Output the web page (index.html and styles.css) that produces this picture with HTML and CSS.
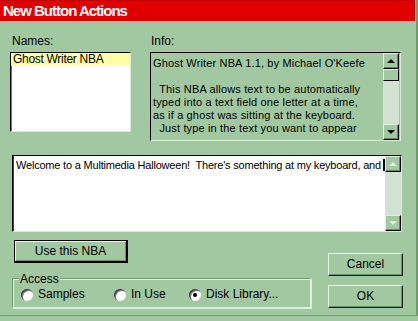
FILE: index.html
```html
<!DOCTYPE html>
<html>
<head lang="en">
    <meta charset="UTF-8">
    <title>New Button Actions</title>
    <link rel="stylesheet" href="styles.css">
</head>
<body>
<div class="dialog">
    <div class="titlebar">New Button Actions</div>
    <div class="content">
        <div class="top">
            <div class="names">
                <div class="label">Names:</div>
                <div class="listbox">
                    <div class="item sel">Ghost Writer NBA</div>
                </div>
            </div>
            <div class="info">
                <div class="label">Info:</div>
                <div class="infobox">
                    <div class="infotext">Ghost Writer NBA 1.1, by Michael O'Keefe

  This NBA allows text to be automatically
typed into a text field one letter at a time,
as if a ghost was sitting at the keyboard.
  Just type in the text you want to appear</div>
                    <div class="vscroll">
                        <div class="sbtn"><span class="arr up"></span></div>
                        <div class="thumb"></div>
                        <div class="track"></div>
                        <div class="sbtn"><span class="arr down"></span></div>
                    </div>
                </div>
            </div>
        </div>

        <div class="editbox">
            <div class="edittext">Welcome to a Multimedia Halloween!  There's something at my keyboard, and<span class="caret"></span></div>
            <div class="vscroll off">
                <div class="sbtn"><span class="arr up"></span></div>
                <div class="track"></div>
                <div class="sbtn"><span class="arr down"></span></div>
            </div>
        </div>

        <div class="bottom">
            <div class="left">
                <div class="btn default">Use this NBA</div>
                <div class="access">
                    <div class="legend">Access</div>
                    <div class="radios">
                        <div class="radio r1"><span class="dot"></span>Samples</div>
                        <div class="radio r2"><span class="dot"></span>In Use</div>
                        <div class="radio r3"><span class="dot on"></span>Disk Library...</div>
                    </div>
                </div>
            </div>
            <div class="right">
                <div class="btn">Cancel</div>
                <div class="btn">OK</div>
            </div>
        </div>
    </div>
</div>
</body>
</html>
```
FILE: styles.css
```css
* {
    margin: 0;
    padding: 0;
    box-sizing: border-box;
}

body {
    background: #a2c8a2;
    font-family: "Liberation Sans", Arial, sans-serif;
    font-size: 11px;
    line-height: 13px;
    color: #000;
}

.dialog {
    width: 418px;
    height: 316px;
    border-right: 2px solid #6e9a6e;
    border-bottom: 1px solid #6e9a6e;
}

.titlebar {
    height: 21px;
    margin-right: 1px;
    background: #e00000;
    border-top: 1px solid #c00000;
    border-right: 1px solid #c00000;
    color: #fff;
    font-weight: bold;
    font-size: 15px;
    letter-spacing: -1px;
    line-height: 19px;
    padding-left: 3px;
}

.content {
    padding: 13px 0 0 10px;
}

.label {
    height: 14px;
    line-height: 14px;
    margin-bottom: 4px;
    font-size: 12px;
}

.top {
    display: flex;
    gap: 19px;
}

.names .label {
    padding-left: 2px;
}

.info .label {
    padding-left: 1px;
}

.listbox {
    width: 121px;
    height: 80px;
    background: #fff;
    border: 1px solid;
    border-color: #000 #d8ecd8 #d8ecd8 #000;
    box-shadow: inset 1px 1px #707070;
}

.item {
    height: 13px;
    padding-left: 2px;
    line-height: 13px;
    font-size: 12px;
    letter-spacing: -0.3px;
}

.item.sel {
    background: #ffffa8;
}

.infobox {
    display: flex;
    width: 251px;
    height: 89px;
    border: 1px solid;
    border-color: #000 #d8ecd8 #d8ecd8 #000;
}

.infotext {
    flex: 1;
    white-space: pre;
    padding: 4px 0 0 2px;
    letter-spacing: 0.15px;
    overflow: hidden;
}

.vscroll {
    width: 16px;
    display: flex;
    flex-direction: column;
    margin-right: 1px;
}

.sbtn {
    height: 16px;
    background: #a2c8a2;
    border: 1px solid;
    border-color: #e0f0e0 #000 #000 #e0f0e0;
    box-shadow: inset -1px -1px #5e8a5e;
    display: flex;
    align-items: center;
    justify-content: center;
}

.thumb {
    height: 12px;
    background: #a2c8a2;
    border: 1px solid;
    border-color: #e0f0e0 #000 #000 #e0f0e0;
}

.track {
    flex: 1;
    background: #d2e2d2;
}

.arr {
    width: 0;
    height: 0;
    border-left: 4px solid transparent;
    border-right: 4px solid transparent;
}

.arr.up {
    border-bottom: 4px solid #000;
}

.arr.down {
    border-top: 4px solid #000;
}

.vscroll.off .arr.up {
    border-bottom-color: #e0f0e0;
}

.vscroll.off .arr.down {
    border-top-color: #e0f0e0;
}

.editbox {
    display: flex;
    width: 390px;
    height: 77px;
    margin: 14px 0 0 2px;
    background: #fff;
    border: 1px solid;
    border-color: #000 #d8ecd8 #d8ecd8 #000;
    box-shadow: inset 1px 0 #404040;
}

.editbox .vscroll {
    margin-right: 0;
}

.edittext {
    flex: 1;
    white-space: pre;
    padding: 3px 0 0 3px;
    letter-spacing: -0.2px;
    overflow: hidden;
}

.caret {
    display: inline-block;
    width: 2px;
    height: 12px;
    background: #000;
    vertical-align: -2px;
    margin-left: 2px;
}

.bottom {
    display: flex;
    margin-top: 8px;
}

.left {
    width: 301px;
    padding-left: 2px;
}

.btn {
    height: 23px;
    line-height: 21px;
    text-align: center;
    font-size: 12px;
    border: 1px solid;
    border-color: #e8f4e8 #202020 #202020 #e8f4e8;
    box-shadow: inset -1px -1px #6a906a;
}

.btn.default {
    width: 114px;
    margin-left: 2px;
    border-color: #000;
    border-width: 1px 2px 2px 1px;
    box-shadow: inset 1px 1px #e8f4e8, inset -1px -1px #6a906a;
}

.access {
    margin-top: 9px;
    height: 37px;
    font-size: 12px;
}

.legend {
    position: relative;
    display: inline-block;
    margin-left: 7px;
    padding: 0 1px;
    height: 14px;
    line-height: 14px;
    background: #a2c8a2;
    z-index: 1;
}

.radios {
    display: flex;
    height: 30px;
    margin-top: -8px;
    padding: 9px 0 0 8px;
    border: 1px solid;
    border-color: #6e9a6e #e0f0e0 #e0f0e0 #6e9a6e;
    box-shadow: 1px 1px #e0f0e0, inset 1px 1px #e0f0e0;
}

.radio {
    display: flex;
    align-items: center;
    height: 13px;
}

.r1 {
    width: 93px;
}

.r2 {
    width: 75px;
}

.dot {
    width: 12px;
    height: 12px;
    border-radius: 50%;
    background: #fff;
    margin-right: 5px;
    box-shadow: inset 1px 1px #404040, inset 2px 2px #7a7a7a;
    display: flex;
    align-items: center;
    justify-content: center;
}

.dot.on::after {
    content: "";
    width: 4px;
    height: 4px;
    border-radius: 50%;
    background: #000;
}

.right {
    display: flex;
    flex-direction: column;
    gap: 9px;
    padding-top: 13px;
    margin-left: 17px;
    width: 75px;
}
```
